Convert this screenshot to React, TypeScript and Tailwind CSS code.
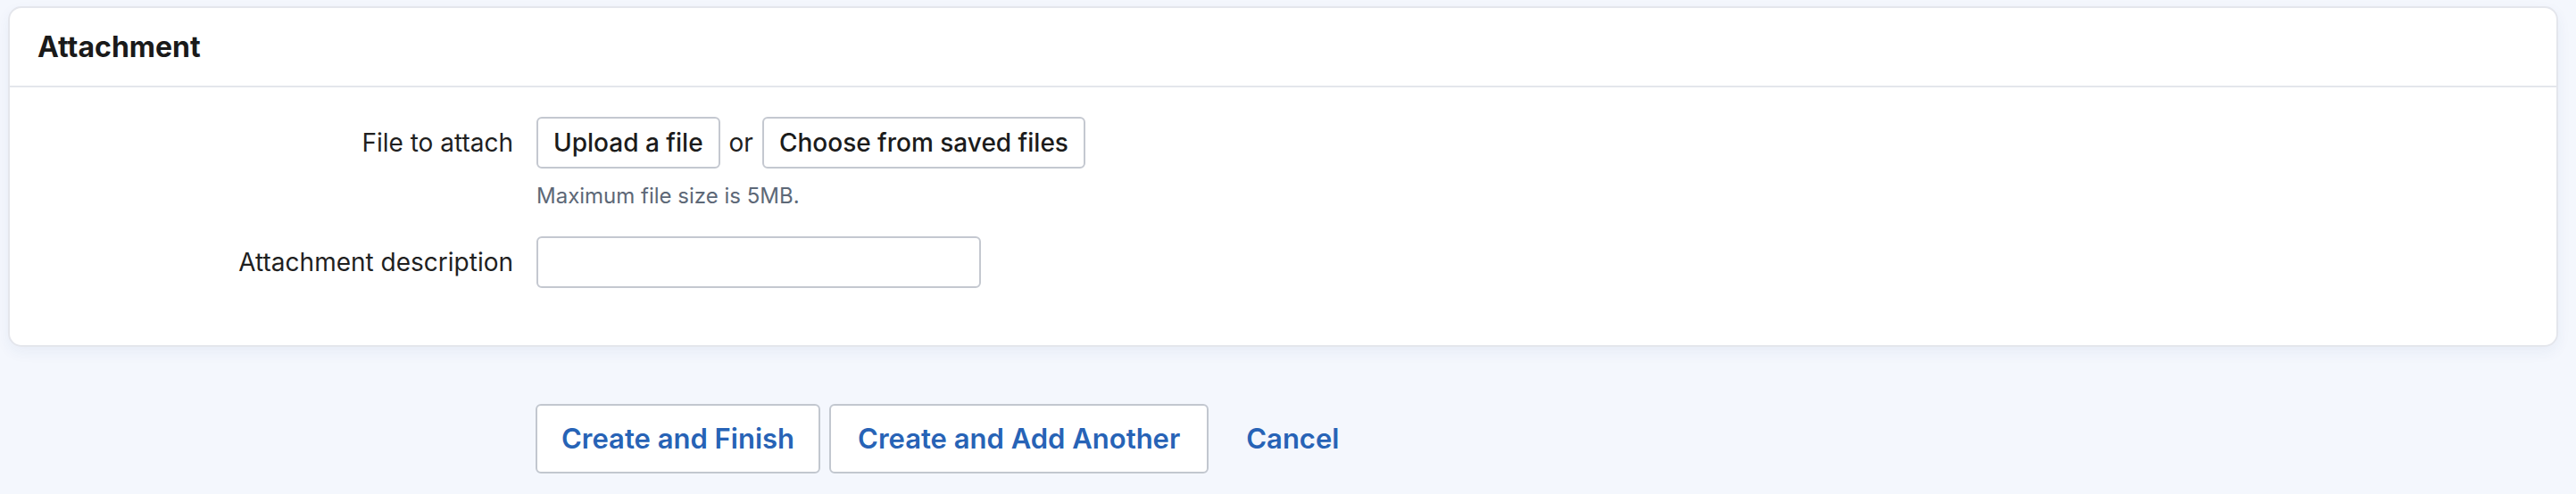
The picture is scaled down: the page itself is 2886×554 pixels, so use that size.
export default function App() {
  return (
    <div
      className="min-h-screen w-full bg-[#f4f7fd] pl-[9px] pr-[20px] pt-[7px]"
      style={{ fontFamily: 'Inter, "Open Sans", sans-serif' }}
    >
      <div className="rounded-[15px] border-2 border-[#e4e6ec] bg-white shadow-[0_6px_16px_rgba(40,70,140,0.06)]">
        <div className="flex h-[89px] items-center border-b-2 border-[#e4e6ec] pl-[31px]">
          <h2 className="text-[32px] font-bold text-[#1a1a1a]">Attachment</h2>
        </div>

        <div className="pt-[33px] pb-[64px]">
          <div className="flex items-center gap-[26px]">
            <label className="w-[564px] text-right text-[28px] text-[#1f1f1f]">File to attach</label>
            <div className="flex items-center gap-[10px]">
              <button className="h-[58px] rounded-[6px] border-2 border-[#c4c8d0] bg-white px-[17px] text-[28px] font-medium text-[#1b1b1b]">
                Upload a file
              </button>
              <span className="text-[28px] text-[#1f1f1f]">or</span>
              <button className="h-[58px] rounded-[6px] border-2 border-[#c4c8d0] bg-white px-[17px] text-[28px] font-medium text-[#1b1b1b]">
                Choose from saved files
              </button>
            </div>
          </div>
          <div className="mt-[16px] pl-[590px] text-[24px] leading-[30px] text-[#5d6877]">
            Maximum file size is 5MB.
          </div>

          <div className="mt-[30px] flex items-center gap-[26px]">
            <label className="w-[564px] text-right text-[28px] text-[#1f1f1f]">Attachment description</label>
            <input
              type="text"
              className="h-[58px] w-[498px] rounded-[6px] border-2 border-[#c4c8d0] bg-white px-3 text-[28px] outline-none"
            />
          </div>
        </div>
      </div>

      <div className="flex items-center gap-[10px] pt-[64px] pl-[591px]">
        <button className="h-[78px] rounded-[6px] border-2 border-[#c2c7cf] bg-white px-[27px] text-[31px] font-semibold text-[#2763b6]">
          Create and Finish
        </button>
        <button className="h-[78px] rounded-[6px] border-2 border-[#c2c7cf] bg-white px-[30px] text-[31px] font-semibold text-[#2763b6]">
          Create and Add Another
        </button>
        <button className="h-[78px] px-[32px] text-[31px] font-semibold text-[#2763b6]">Cancel</button>
      </div>
    </div>
  );
}
